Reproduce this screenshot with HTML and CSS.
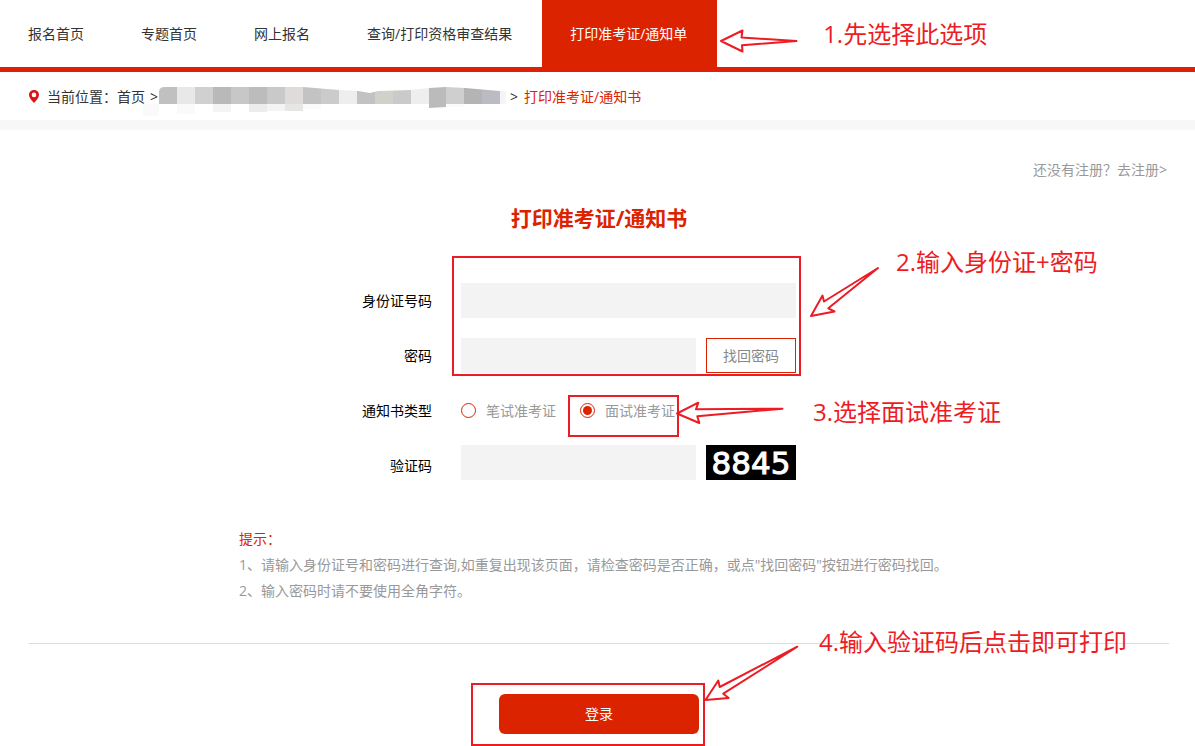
FILE: index.html
```html
<!DOCTYPE html>
<html lang="zh-CN">
<head>
<meta charset="utf-8">
<meta name="viewport" content="width=device-width, initial-scale=1">
<title>打印准考证/通知书</title>
<link rel="stylesheet" href="styles.css">
</head>
<body>
<nav class="nav">
  <a class="nav-item" href="#">报名首页</a>
  <a class="nav-item" href="#">专题首页</a>
  <a class="nav-item" href="#">网上报名</a>
  <a class="nav-item" href="#">查询/打印资格审查结果</a>
  <div class="nav-current">
    <a class="nav-item active" href="#">打印准考证/通知单</a>
    <svg class="arrow arrow-nav" width="82" height="26" viewBox="718 28 82 26" aria-hidden="true"><path d="M721 41 742.500 30.500 741.500 37.500 796.500 41 742 45.300 742.500 51.500Z"/></svg>
    <p class="note note-nav">1.先选择此选项</p>
  </div>
</nav>

<div class="crumbs">
  <svg class="pin" width="10" height="13" viewBox="0 0 10 13" aria-hidden="true"><path fill="#dc1414" fill-rule="evenodd" d="M5 0C2 0 0 2.200 0 5c0 3 2.600 5.200 5 8 2.400-2.800 5-5 5-8C10 2.200 8 0 5 0Zm0 2.600A2.300 2.300 0 1 1 5 7.200 2.300 2.300 0 0 1 5 2.600Z"/></svg>
  <span class="where">当前位置：</span><a href="#">首页</a><span class="sep">&gt;</span>
  <svg class="mosaic" width="366" height="32" viewBox="142 84 366 32" aria-hidden="true">
    <defs><clipPath id="smear"><path d="M159 91q0-5 6-5h138l12 1 24 2 19 1 12 2 8-2 33-1 18-2 17-1 19 1 35 3h6v13H159Z"/></clipPath></defs>
    <g clip-path="url(#smear)">
      <path fill="#c0c0c0" d="M159 84h18v20h-18z"/><path fill="#e8e8e8" d="M177 84h18v20h-18z"/>
      <path fill="#d0d0d0" d="M195 84h18v20h-18z"/><path fill="#b9b9b9" d="M213 84h18v20h-18z"/>
      <path fill="#c7c7c7" d="M231 84h18v20h-18z"/><path fill="#bcbcbe" d="M249 84h18v20h-18z"/>
      <path fill="#c9c9c9" d="M267 84h18v20h-18z"/><path fill="#dedbda" d="M285 84h18v20h-18z"/>
      <path fill="#c3c3c3" d="M303 84h18v20h-18z"/><path fill="#cbcbcb" d="M321 84h18v20h-18z"/>
      <path fill="#eee" d="M339 84h18v20h-18z"/><path fill="#c2c2c2" d="M357 84h18v20h-18z"/>
      <path fill="#d1d1cc" d="M375 84h18v20h-18z"/><path fill="#cacaca" d="M393 84h18v20h-18z"/>
      <path fill="#eee" d="M411 84h18v20h-18z"/><path fill="#bbb" d="M429 84h17v20h-17z"/>
      <path fill="#cfcfcf" d="M446 84h18v20h-18z"/><path fill="#b4b4b4" d="M464 84h18v20h-18z"/>
      <path fill="#bbbcc3" d="M482 84h18v20h-18z"/><path fill="#f5f5f5" d="M500 84h6v20h-6z"/>
    </g>
    <path fill="#fafafa" d="M143 103h16v12h-16zM177 103h18v10h-18zM303 103h18v5h-18zM446 103h18v3h-18z"/>
    <path fill="#f4f4f4" d="M213 103h18v8h-18zM267 103h18v7h-18z"/>
    <path fill="#ececec" d="M249 103h18v8h-18z"/><path fill="#e6e6e6" d="M285 103h18v7h-18z"/>
    <path fill="#bbb" d="M429 102h17v4l-17 1z"/>
  </svg>
  <span class="sep-last">&gt;</span><a class="here" href="#">打印准考证/通知书</a>
</div>

<main class="panel">
  <a class="register" href="#">还没有注册？去注册&gt;</a>
  <h1>打印准考证/通知书</h1>
  <form class="form">
    <div class="group">
      <div class="row">
        <label class="label" for="idno">身份证号码</label>
        <input class="field wide" id="idno" type="text">
      </div>
      <div class="row">
        <label class="label" for="pwd">密码</label>
        <input class="field" id="pwd" type="password">
        <button class="recover" type="button">找回密码</button>
      </div>
      <span class="frame frame-login"></span>
      <svg class="arrow arrow-login" width="74" height="56" viewBox="808 264 74 56" aria-hidden="true"><path d="M811 316 822.500 295.500 824 301.500 878 268 828.300 308.300 834.500 311.500Z"/></svg>
      <p class="note note-login">2.输入身份证+密码</p>
    </div>
    <div class="row types" role="radiogroup" aria-labelledby="kind">
      <span class="label" id="kind">通知书类型</span>
      <label class="choice"><input type="radio" name="kind">笔试准考证</label>
      <label class="choice"><input type="radio" name="kind" checked>面试准考证</label>
      <span class="frame frame-type"></span>
      <svg class="arrow arrow-type" width="112" height="28" viewBox="674 399 112 28" aria-hidden="true"><path d="M677 413.500 698.300 402.700 696 409.300 782.500 408.700 697.300 416.300 699.300 423Z"/></svg>
      <p class="note note-type">3.选择面试准考证</p>
    </div>
    <div class="row code">
      <label class="label" for="code">验证码</label>
      <input class="field" id="code" type="text">
      <span class="captcha">8845</span>
    </div>
    <div class="tips">
      <p class="tips-title">提示：</p>
      <p>1、请输入身份证号和密码进行查询,如重复出现该页面，请检查密码是否正确，或点"找回密码"按钮进行密码找回。</p>
      <p>2、输入密码时请不要使用全角字符。</p>
    </div>
  </form>
  <hr>
  <div class="submit">
    <button class="login" type="button">登录</button>
    <span class="frame frame-submit"></span>
    <svg class="arrow arrow-submit" width="99" height="60" viewBox="702 643 99 60" aria-hidden="true"><path d="M705.500 700 718.300 680.500 719.700 687 797.300 646.700 723.300 693.700 728.700 698Z"/></svg>
    <p class="note note-submit">4.输入验证码后点击即可打印</p>
  </div>
</main>
</body>
</html>
```
FILE: styles.css
```css
* { box-sizing: border-box; }
body, p, h1 { margin: 0; }
body {
  background: #fff;
  color: #333;
  font: 14px/24px "Open Sans", "Noto Sans CJK SC", sans-serif;
}
a { color: inherit; text-decoration: none; }
input, button { font: inherit; margin: 0; }

.nav {
  display: flex;
  gap: 1px;
  border-bottom: 5px solid #de2006;
}
.nav-item {
  display: block;
  padding: 0 28px;
  line-height: 67px;
  white-space: nowrap;
}
.nav-current { position: relative; margin-left: 1px; }
.active { padding-right: 30px; background: #dc2300; color: #fff; }

.crumbs {
  display: flex;
  align-items: center;
  height: 58px;
  padding: 2px 29px 0;
  border-bottom: 10px solid #f7f7f7;
  white-space: nowrap;
}
.pin { margin: 0 8px 2px 0; }
.sep { width: 8px; margin-left: 5px; }
.mosaic { margin: 8px 2px 0 -16px; }
.sep-last { margin-right: 6px; }
.here { color: #dc2300; }

.panel {
  display: flex;
  flex-direction: column;
  padding: 28px 26px 12px 29px;
}
.register { align-self: flex-end; margin-right: 2px; color: #999; }
h1 {
  margin-top: 21px;
  color: #dc2300;
  font-size: 21px;
  line-height: 30px;
  text-align: center;
}
.form {
  width: 100%;
  max-width: 720px;
  margin: 50px auto 0;
}
.group, .types, .submit { position: relative; }
.group { display: grid; gap: 20px; }
.row { display: flex; align-items: center; min-height: 35px; }
.label {
  width: 193px;
  margin-right: 29px;
  color: #000;
  text-align: right;
}
.field {
  width: 235px;
  height: 35px;
  padding: 0 10px;
  border: 0;
  background: #f3f3f3;
}
.wide { width: 335px; }
.recover, .captcha { width: 90px; height: 35px; margin-left: 10px; }
.recover {
  padding: 0;
  border: 1px solid #dc2300;
  background: #fff;
  color: #888;
}
.types { margin-top: 20px; }
.choice {
  display: flex;
  align-items: center;
  gap: 10px;
  margin-right: 24px;
  color: #999;
}
.choice input {
  appearance: none;
  width: 15px;
  height: 15px;
  border: 1px solid #dc2300;
  border-radius: 50%;
  background: #fff;
}
.choice input:checked {
  padding: 2px;
  background: #dc2300 content-box;
}
.code { margin-top: 17px; }
.code .label { padding-top: 6px; }
.captcha {
  background: #000;
  color: #fff;
  font: 31px/37px "DejaVu Sans", sans-serif;
  -webkit-text-stroke: 1px #fff;
  text-align: center;
}
.tips { margin-top: 46px; color: #999; line-height: 26px; }
.tips-title { color: #dc2300; }
hr {
  width: 100%;
  margin: 39px 0 0;
  border: 0;
  border-top: 1px solid #ddd;
}
.submit { width: 200px; margin: 50px auto 0; }
.login {
  display: block;
  width: 100%;
  height: 40px;
  border: 0;
  border-radius: 6px;
  background: #dc2300;
  color: #fff;
}

/* Step-by-step guide drawn over the page */
.frame, .arrow, .note { position: absolute; pointer-events: none; }
.frame { border: 2px solid #ed1c24; }
.arrow path {
  fill: #fff;
  stroke: #ed1c24;
  stroke-width: 2;
  stroke-linejoin: round;
}
.note {
  color: #ed1c24;
  font-size: 24px;
  line-height: 36px;
  white-space: nowrap;
}
.arrow-nav { left: 176px; top: 28px; }
.note-nav { left: 281px; top: 16px; }
.frame-login { left: 213px; top: -27px; width: 349px; height: 120px; }
.arrow-login { left: 569px; top: -19px; }
.note-login { left: 657px; top: -39px; }
.frame-type { left: 329px; top: 2px; width: 111px; height: 42px; }
.arrow-type { left: 435px; top: 6px; }
.note-type { left: 574px; top: 1px; }
.frame-submit { left: -28px; top: -11px; width: 234px; height: 63px; }
.arrow-submit { left: 203px; top: -51px; }
.note-submit { left: 320px; top: -70px; }
```
